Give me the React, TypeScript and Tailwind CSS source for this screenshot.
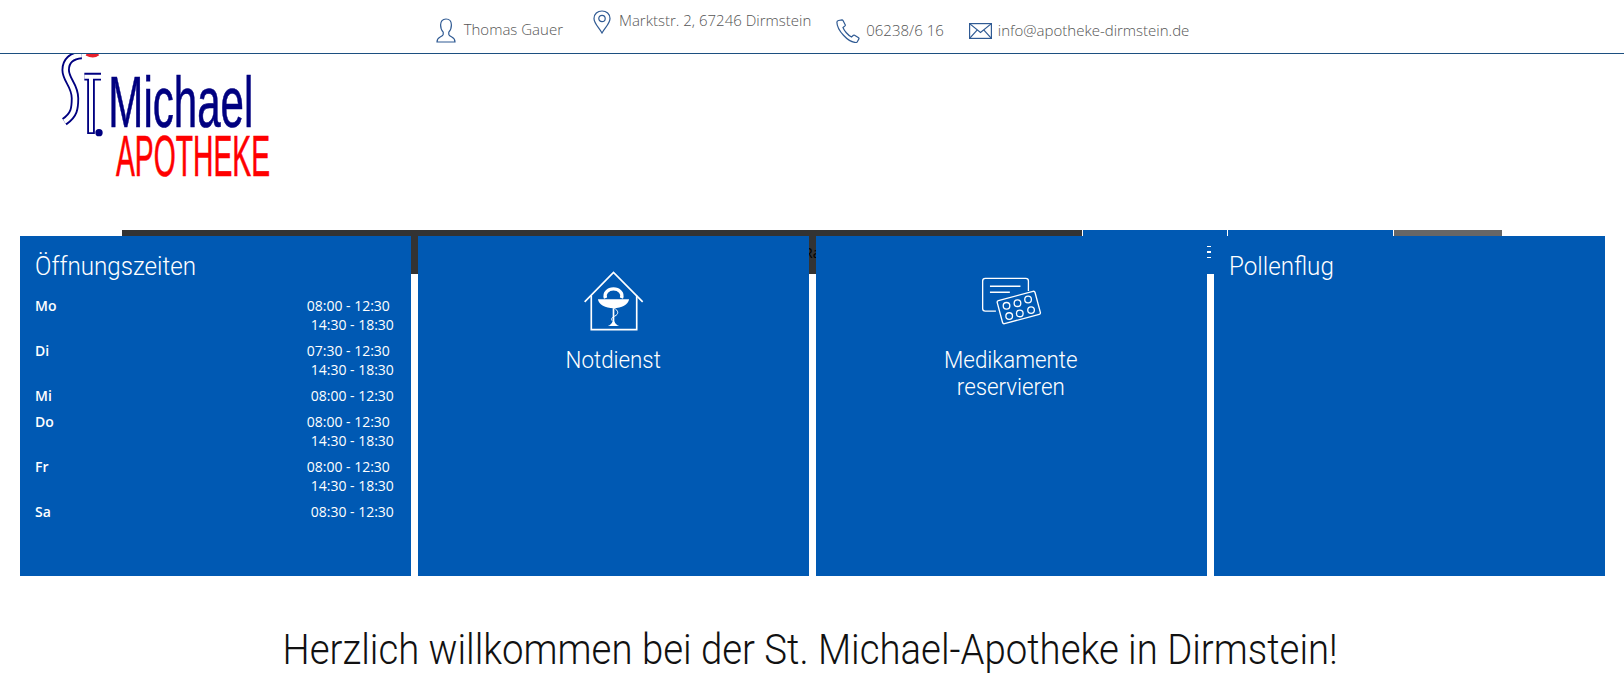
const UserIcon = () => (
  <svg width="20" height="25" viewBox="0 0 20 25" fill="none" stroke="#2f5a93" strokeWidth="1.2">
    <path d="M10 1C6.5 1 4.6 3.6 4.6 7c0 3 1 5.6 2.6 7.2v2.3c0 1-1.2 1.6-3 2.5S1 21 1 24h18c0-3-1.400-4.100-3.200-5s-3-1.500-3-2.500v-2.300C14.400 12.600 15.400 10 15.400 7 15.400 3.600 13.500 1 10 1z" />
  </svg>
);

const PinIcon = () => (
  <svg width="18" height="24" viewBox="0 0 18 24" fill="none" stroke="#2f5a93" strokeWidth="1.2">
    <path d="M9 23C6 17.500 1 13.500 1 8.500 1 4 4.600 1 9 1s8 3 8 7.500c0 5-5 9-8 14.500z" />
    <circle cx="9" cy="8.500" r="3.200" />
  </svg>
);

const PhoneIcon = () => (
  <svg width="24" height="24" viewBox="0 0 24 24" fill="none" stroke="#2f5a93" strokeWidth="1.2">
    <path d="M2.500 1.500 6 .8c.5 0 .8.2 1 .6l2.200 4.400c.2.400.1.800-.2 1.100L7 8.500c1 3 5 7.800 8.500 9.500l1.900-1.700c.4-.3.800-.3 1.200-.1l4 2.600c.4.300.5.700.3 1.100l-1.600 2.800c-.3.500-.8.800-1.400.8C12 23.500 1 11 .9 3.200c0-.8.600-1.500 1.600-1.700z" />
  </svg>
);

const MailIcon = () => (
  <svg width="23" height="16" viewBox="0 0 23 16" fill="none" stroke="#2f5a93" strokeWidth="1.2">
    <rect x=".6" y=".6" width="21.800" height="14.800" />
    <path d="M.6.6 11.500 9.500 22.400.6M.6 15.400 8.300 6.800M22.400 15.400 14.700 6.800" />
  </svg>
);

const NotdienstIcon = () => (
  <svg width="63" height="63" viewBox="155 45 190 190" fill="none" stroke="white">
    <path d="M163 141 250 52l88 89" strokeWidth="5" />
    <path d="M183 122v103h137V122" strokeWidth="5" />
    <path d="M203 133h94c-3 16-22 27-47 27s-44-11-47-27z" fill="white" stroke="none" />
    <path d="M226 130c-6-16 8-28 24-28s30 12 24 28" strokeWidth="10" />
    <path d="M250 160v46" strokeWidth="5" />
    <path d="M233 214c8-4 12-8 14-14h6c2 6 6 10 14 14z" fill="white" stroke="none" />
    <path d="M252 160c14 8 14 18 2 24-8 3-12 8-8 14" strokeWidth="3" />
  </svg>
);

const MedikamenteIcon = () => (
  <svg width="63" height="52" viewBox="148 60 190 155" fill="none" stroke="white" strokeWidth="4">
    <path d="M196 165h-32c-5 0-8-3-8-8V74c0-5 3-8 8-8h122c5 0 8 3 8 8v30" />
    <path d="M178 90h92M178 108h60" />
    <rect x="206" y="118" width="118" height="72" rx="5" transform="rotate(-15 265 154)" />
    <circle cx="228" cy="149" r="10" />
    <circle cx="261" cy="141" r="10" />
    <circle cx="293" cy="130" r="10" />
    <circle cx="236" cy="180" r="10" />
    <circle cx="268" cy="172" r="10" />
    <circle cx="302" cy="162" r="10" />
  </svg>
);

const Logo = () => (
  <svg width="250" height="145" viewBox="0 0 750 435" className="ml-10 -mt-[9px]">
    <path d="M140 26c14 8 26 6 34 0" stroke="#e8202a" strokeWidth="12" fill="none" />
    <path d="M125 30C95 32 77 48 77 75c0 30 28 45 28 85 0 30-2 50-32 70" stroke="#000080" strokeWidth="25" fill="none" />
    <path d="M125 30C95 32 77 48 77 75c0 30 28 45 28 85 0 30-2 50-32 70" stroke="white" strokeWidth="14" fill="none" />
    <path d="M133 95h50M153 95v172" stroke="#000080" strokeWidth="23" fill="none" />
    <path d="M133 95h50M153 95v167" stroke="white" strokeWidth="12" fill="none" />
    <circle cx="177" cy="263" r="11" fill="#000080" />
    <text x="205" y="245" textLength="435" lengthAdjust="spacingAndGlyphs" fontFamily="Liberation Sans, sans-serif" fontSize="215" fill="#000080" stroke="#000080" strokeWidth="2">
      Michael
    </text>
    <text x="228" y="394" textLength="462" lengthAdjust="spacingAndGlyphs" fontFamily="Liberation Sans, sans-serif" fontSize="172" fill="#ff0000" stroke="#ff0000" strokeWidth="2">
      APOTHEKE
    </text>
  </svg>
);

const hours = [
  { day: "Mo", lines: ["08:00 - 12:30", "14:30 - 18:30"] },
  { day: "Di", lines: ["07:30 - 12:30", "14:30 - 18:30"] },
  { day: "Mi", lines: ["08:00 - 12:30"] },
  { day: "Do", lines: ["08:00 - 12:30", "14:30 - 18:30"] },
  { day: "Fr", lines: ["08:00 - 12:30", "14:30 - 18:30"] },
  { day: "Sa", lines: ["08:30 - 12:30"] },
];

export default function App() {
  return (
    <div className="h-[700px] overflow-hidden bg-white font-['Open_Sans',sans-serif]">
      {/* Kontaktleiste */}
      <header className="h-[54px] border-b border-[#1c4f80] flex justify-center pl-[1px] font-light text-[15px] text-[#555]">
        <div className="flex items-center gap-2 mt-[5px] h-[50px]">
          <UserIcon />
          <span className="mb-[2px]">Thomas Gauer</span>
        </div>
        <div className="flex items-start gap-2 ml-[30px] mt-[10px]">
          <PinIcon />
          <span className="leading-[20px]">Marktstr. 2, 67246 Dirmstein</span>
        </div>
        <div className="flex items-center gap-[6px] ml-[25px] mt-[6px] h-[50px]">
          <PhoneIcon />
          <span className="mb-[2px]">06238/6 16</span>
        </div>
        <div className="flex items-center gap-[6px] ml-[25px] mt-[6px] h-[50px]">
          <MailIcon />
          <span className="mb-[2px]">info@apotheke-dirmstein.de</span>
        </div>
      </header>

      <div className="h-[176px] overflow-hidden">
        <Logo />
      </div>

      {/* Navigation, von den Kacheln verdeckt */}
      <nav className="mx-[122px] h-[44px] flex bg-[#333]">
        <div className="w-[960px] flex items-center pl-[682px] text-black text-[14px]">Rat</div>
        <div className="w-[145px] border-l border-white bg-[#0059b3] flex flex-col items-end justify-center gap-[4px] pr-[16px]">
          <span className="w-[4px] h-[1.500px] bg-white" />
          <span className="w-[4px] h-[1.500px] bg-white" />
          <span className="w-[4px] h-[1.500px] bg-white" />
        </div>
        <div className="w-[166px] border-l border-white bg-[#0059b3]" />
        <div className="flex-1 border-l border-white bg-[#666]" />
      </nav>

      {/* Kacheln */}
      <div className="relative -mt-[38px] ml-5 mr-[19.500px] grid grid-cols-4 gap-[7px] h-[340px] text-white">
        <div className="bg-[#0059b3] pl-[15px] pr-[17px] pt-[17px]">
          <h3 className="font-[Roboto] font-light text-[26px] leading-[27px] origin-left scale-x-[0.93]">Öffnungszeiten</h3>
          <div className="mt-[17px] text-[14px] leading-[18.700px]">
            {hours.map((row) => (
              <div key={row.day} className="flex justify-between mb-[7.500px]">
                <b className="font-semibold">{row.day}</b>
                <div className="text-right">
                  {row.lines.map((line, i) => (
                    <div key={line} className={row.lines.length > 1 && i === 0 ? "pr-1" : ""}>
                      {line}
                    </div>
                  ))}
                </div>
              </div>
            ))}
          </div>
        </div>
        <div className="bg-[#0059b3] pt-[34px] flex flex-col items-center font-[Roboto] font-light text-[24px] leading-[27px]">
          <NotdienstIcon />
          <div className="mt-[14px] scale-x-[0.93]">Notdienst</div>
        </div>
        <div className="bg-[#0059b3] pt-[34px] flex flex-col items-center font-[Roboto] font-light text-[24px] leading-[27px] text-center">
          <div className="h-[63px] flex items-center">
            <MedikamenteIcon />
          </div>
          <div className="mt-[14px] scale-x-[0.93]">
            Medikamente
            <br />
            reservieren
          </div>
        </div>
        <div className="bg-[#0059b3] px-[15px] pt-[17px]">
          <h3 className="font-[Roboto] font-light text-[26px] leading-[27px] origin-left scale-x-[0.93]">Pollenflug</h3>
        </div>
      </div>

      <h1 className="mt-[47px] pr-[4px] text-center font-[Roboto] font-light text-[42px] leading-[54px] text-[#111] scale-x-[0.913]">
        Herzlich willkommen bei der St. Michael-Apotheke in Dirmstein!
      </h1>
    </div>
  );
}
